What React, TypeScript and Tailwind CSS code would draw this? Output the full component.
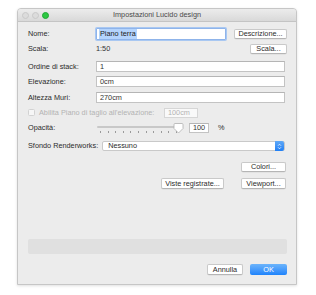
import React from "react";

const Btn = ({ label, className = "" }: { label: string; className?: string }) => (
  <div
    className={`flex items-center justify-center rounded-[2px] border border-[#c9c9c9] border-b-[#b5b5b5] bg-white text-[#2b2b2b] shadow-[0_0.5px_0.5px_rgba(0,0,0,0.08)] ${className}`}
  >
    {label}
  </div>
);

const Field = ({ value, className = "" }: { value: string; className?: string }) => (
  <div
    className={`flex items-center border border-[#c3c3c3] border-t-[#b5b5b5] bg-white pl-[3px] text-[#333] ${className}`}
  >
    {value}
  </div>
);

const ticks = Array.from({ length: 11 });

export default function App() {
  return (
    <div className="h-[295px] w-[316px] bg-white pl-[17px] pt-[8px] font-['Liberation_Sans',Arial,sans-serif] text-[7.3px] leading-none text-[#2b2b2b]">
      <div className="flex h-[277px] w-[280px] flex-col overflow-hidden rounded-t-[4px] border border-[#c6c6c6] bg-[#ececec] shadow-[0_1px_3px_rgba(0,0,0,0.12)]">
        {/* title bar */}
        <div className="relative flex h-[13px] shrink-0 items-center justify-center border-b border-[#c4c4c4] bg-gradient-to-b from-[#ececec] to-[#d9d9d9]">
          <div className="absolute left-[4px] top-[3px] flex gap-[3px]">
            <div className="h-[7px] w-[7px] rounded-full border border-[#c8c8c8] bg-[#dcdcdc]" />
            <div className="h-[7px] w-[7px] rounded-full border border-[#c8c8c8] bg-[#dcdcdc]" />
            <div className="h-[7px] w-[7px] rounded-full border border-[#1fa834] bg-[#2dc842]" />
          </div>
          <span className="text-[#4a4a4a]">Impostazioni Lucido design</span>
        </div>

        <div className="flex flex-1 flex-col pl-[10px] pr-[9px]">
          {/* Nome */}
          <div className="mt-[6px] flex h-[12px] items-center">
            <span className="w-[68px]">Nome:</span>
            <div className="flex h-[12px] flex-1 items-center rounded-[1px] border border-[#8fb4ea] bg-white pl-[2px] shadow-[0_0_0_1px_#a9c8f2]">
              <span className="bg-[#b4d4fd] px-[1px] py-[1px] text-[#222]">Piano terra</span>
            </div>
            <Btn label="Descrizione..." className="ml-[8px] h-[10px] w-[53px]" />
          </div>

          {/* Scala */}
          <div className="mt-[4px] flex h-[10px] items-center">
            <span className="w-[68px]">Scala:</span>
            <span className="text-[#333]">1:50</span>
            <Btn label="Scala..." className="ml-auto h-[10px] w-[37px]" />
          </div>

          {/* Ordine */}
          <div className="mt-[7px] flex h-[11px] items-center">
            <span className="w-[68px]">Ordine di stack:</span>
            <Field value="1" className="mr-[2px] h-[11px] flex-1" />
          </div>

          <div className="mt-[4px] flex h-[11px] items-center">
            <span className="w-[68px]">Elevazione:</span>
            <Field value="0cm" className="mr-[2px] h-[11px] flex-1" />
          </div>

          <div className="mt-[5px] flex h-[11px] items-center">
            <span className="w-[68px]">Altezza Muri:</span>
            <Field value="270cm" className="mr-[2px] h-[11px] flex-1" />
          </div>

          {/* checkbox */}
          <div className="mt-[5px] flex h-[10px] items-center">
            <div className="flex w-[136px] items-center text-[#b3b3b3]">
              <div className="h-[7px] w-[7px] rounded-[1.5px] border border-[#d2d2d2] bg-[#f6f6f6]" />
              <span className="ml-[4px]">Abilita Piano di taglio all'elevazione:</span>
            </div>
            <div className="flex h-[10px] w-[34px] items-center border border-[#d6d6d6] bg-[#f9f9f9] pl-[3px] text-[#b3b3b3]">
              100cm
            </div>
          </div>

          {/* Opacità */}
          <div className="mt-[5px] flex h-[10px] items-center">
            <span className="w-[69px]">Opacità:</span>
            <div className="relative h-[14px] w-[86px] self-start">
              <div className="absolute left-0 right-[4px] top-[3px] h-[2px] rounded-full bg-[#c8c8c8]" />
              <div className="absolute left-[3px] right-[6px] top-[8px] flex justify-between">
                {ticks.map((_, i) => (
                  <div key={i} className="h-[2px] w-px bg-[#9a9a9a]" />
                ))}
              </div>
              <svg className="absolute left-[76px] top-0" width="11" height="11" viewBox="0 0 11 11">
                <path d="M1 1.5 Q1 0.5 2 0.5 H9 Q10 0.5 10 1.5 V5.5 L5.5 10 L1 5.5 Z" fill="#fff" stroke="#b0b0b0" strokeWidth="0.8" />
              </svg>
            </div>
            <Field value="100" className="ml-[6px] h-[10px] w-[20px]" />
            <span className="ml-[9px]">%</span>
          </div>

          {/* Sfondo */}
          <div className="mt-[8px] flex h-[10px] items-center">
            <span>Sfondo Renderworks:</span>
            <div className="ml-[4px] mr-[2px] flex h-[10px] flex-1 items-center rounded-[2px] border border-[#c9c9c9] bg-white">
              <span className="pl-[5px] text-[#2b2b2b]">Nessuno</span>
              <div className="ml-auto flex h-[10px] w-[9px] flex-col items-center justify-center rounded-r-[2px] bg-gradient-to-b from-[#5ea8f7] to-[#1f7ff5]">
                <svg width="5" height="7" viewBox="0 0 5 7">
                  <path d="M1 2.7 L2.5 1.2 L4 2.7 M1 4.3 L2.5 5.8 L4 4.3" fill="none" stroke="#fff" strokeWidth="0.8" />
                </svg>
              </div>
            </div>
          </div>

          {/* Colori */}
          <div className="mt-[11px] flex h-[10px] justify-end">
            <Btn label="Colori..." className="mr-[1px] h-[10px] w-[45px]" />
          </div>

          <div className="mt-[6px] flex h-[11px] justify-end">
            <Btn label="Viste registrate..." className="h-[11px] w-[63px]" />
            <Btn label="Viewport..." className="ml-[17px] mr-[1px] h-[11px] w-[45px]" />
          </div>

          {/* gray bar */}
          <div className="mt-[50px] h-[15px] rounded-[2px] bg-[#e0e0e0]" />

          <div className="mt-[10px] flex h-[11px] justify-end">
            <Btn label="Annulla" className="h-[11px] w-[36px]" />
            <div className="ml-[7px] flex h-[11px] w-[37px] items-center justify-center rounded-[2px] bg-gradient-to-b from-[#6cb4fb] to-[#1c83fb] text-white">
              OK
            </div>
          </div>
        </div>
      </div>
    </div>
  );
}
